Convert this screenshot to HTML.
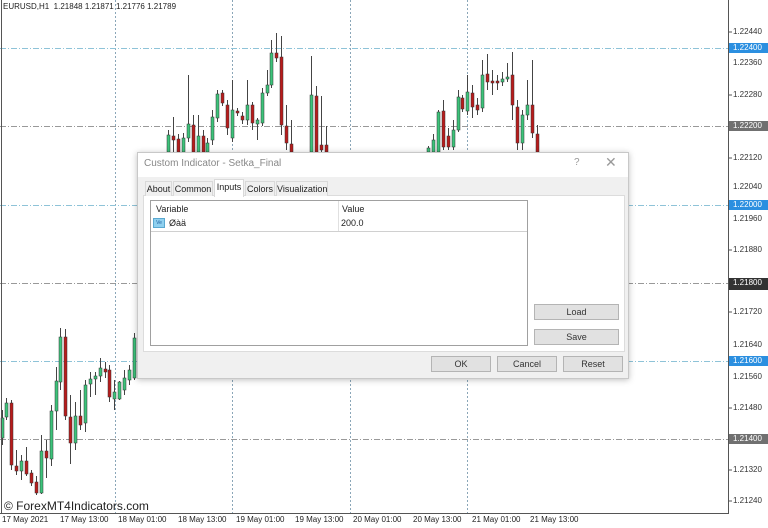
<!DOCTYPE html>
<html><head><meta charset="utf-8"><style>
*{margin:0;padding:0;box-sizing:border-box}
body{width:768px;height:528px;background:#fff;position:relative;overflow:hidden;font-family:"Liberation Sans",Tahoma,sans-serif;color:#222}
.a{position:absolute;white-space:nowrap}
.pl{position:absolute;left:733px;font-size:8px;line-height:10px;color:#333}
.pb{position:absolute;left:729px;width:39px;height:10px;font-size:8px;line-height:10px;padding-left:4px;color:#fff}
.tl{position:absolute;top:515px;font-size:8px;color:#222}
.dlg{position:absolute;left:137px;top:152px;width:492px;height:227px;background:#f0f0f0;border:1px solid #c8c8c8;box-shadow:0 1px 6px rgba(0,0,0,.25);font-size:9px}
.btn{position:absolute;background:#e1e1e1;border:1px solid #b4b4b4;text-align:center;font-size:9px;line-height:14px;color:#333}
.tab{position:absolute;top:28px;height:15px;border:1px solid #d9d9d9;border-bottom:none;background:#f0f0f0;font-size:9px;line-height:14px;text-align:center;color:#222}
</style></head><body>
<svg class="a" style="left:0;top:0" width="768" height="528">
<g stroke="#8aa6b8" stroke-width="1" stroke-dasharray="2,2">
<line x1="115.5" y1="0" x2="115.5" y2="513"/><line x1="232.5" y1="0" x2="232.5" y2="513"/><line x1="350.5" y1="0" x2="350.5" y2="513"/><line x1="467.5" y1="0" x2="467.5" y2="513"/>
</g>
<g stroke-width="1" stroke-dasharray="6,2,1,2">
<line x1="0" y1="48.5" x2="728" y2="48.5" stroke="#8ec3d8"/>
<line x1="0" y1="126.5" x2="728" y2="126.5" stroke="#999"/>
<line x1="0" y1="205.5" x2="728" y2="205.5" stroke="#8ec3d8"/>
<line x1="0" y1="283.5" x2="728" y2="283.5" stroke="#999"/>
<line x1="0" y1="361.5" x2="728" y2="361.5" stroke="#8ec3d8"/>
<line x1="0" y1="439.5" x2="728" y2="439.5" stroke="#999"/>
</g>
<g id="c" stroke="#555" stroke-width="1">
<!-- x, wickTop, wickBot, bodyTop, bodyBot, color -->
</g>
<line x1="728.5" y1="0" x2="728.5" y2="514" stroke="#555"/>
<line x1="0" y1="513.5" x2="729" y2="513.5" stroke="#555"/>
<line x1="1.5" y1="0" x2="1.5" y2="513" stroke="#555"/>
<g stroke="#555"><line x1="729" y1="32" x2="732" y2="32"/><line x1="729" y1="95" x2="732" y2="95"/><line x1="729" y1="158" x2="732" y2="158"/><line x1="729" y1="250" x2="732" y2="250"/><line x1="729" y1="312" x2="732" y2="312"/><line x1="729" y1="408" x2="732" y2="408"/><line x1="729" y1="470" x2="732" y2="470"/><line x1="729" y1="501" x2="732" y2="501"/></g>
</svg>
<script>
var d=[
[2,410,445,418,438,'g'],[6,398,420,403,417,'g'],[11,400,470,403,465,'r'],[16,450,475,466,471,'r'],[21,455,480,461,471,'g'],[26,447,476,461,474,'r'],[31,470,486,473,483,'r'],[36,476,495,482,493,'r'],[41,435,494,451,493,'g'],[46,440,478,451,458,'r'],[51,405,466,411,459,'g'],[56,367,430,381,411,'g'],[60,328,390,337,382,'g'],[65,329,420,337,416,'r'],[70,395,464,417,443,'r'],[75,402,450,416,443,'g'],[80,390,430,416,425,'r'],[85,380,432,385,423,'g'],[90,372,397,379,384,'g'],[95,372,395,376,379,'g'],[100,358,382,368,376,'g'],[105,362,378,369,372,'r'],[109,365,402,370,397,'r'],[114,380,410,392,399,'g'],[119,381,400,382,399,'g'],[124,370,395,378,390,'g'],[129,365,385,370,380,'g'],[134,333,380,338,378,'g'],
[168,130,160,135,152,'g'],[173,117,160,136,140,'r'],[178,134,160,139,152,'r'],[183,133,160,138,152,'g'],[188,75,142,124,138,'g'],[193,115,155,125,152,'r'],[198,115,160,136,152,'g'],[203,130,160,136,152,'r'],[207,138,160,143,152,'g'],[212,110,145,117,140,'g'],[217,90,122,94,118,'g'],[222,90,106,93,103,'r'],[227,100,135,105,128,'r'],[232,80,142,110,138,'g'],[237,108,116,111,113,'r'],[242,112,124,116,120,'r'],[247,80,125,105,120,'g'],[252,102,130,105,123,'r'],[257,118,140,120,124,'g'],[262,88,126,93,123,'g'],[267,70,96,85,93,'g'],[271,40,88,53,85,'g'],[276,33,62,53,58,'r'],[281,36,135,57,125,'r'],[286,105,150,126,143,'r'],[291,120,155,144,152,'r'],[311,56,155,95,152,'g'],[316,86,155,96,152,'r'],[321,96,155,145,150,'r'],[326,126,155,145,152,'r'],
[428,146,152,148,152,'g'],[433,134,152,140,152,'g'],[438,110,155,112,152,'g'],[443,100,150,111,147,'r'],[448,128,150,136,147,'r'],[453,120,150,130,147,'g'],[458,90,132,97,130,'g'],[462,95,112,98,109,'r'],[467,75,115,92,111,'g'],[472,85,118,93,107,'r'],[477,98,115,105,110,'r'],[482,60,112,75,108,'g'],[487,54,90,74,82,'r'],[492,70,95,81,83,'r'],[497,75,90,81,83,'r'],[502,72,86,79,82,'g'],[507,63,82,77,79,'g'],[512,52,120,75,105,'r'],[517,100,150,107,143,'r'],[522,110,150,115,143,'g'],[527,80,120,105,115,'g'],[532,60,138,105,133,'r'],[537,125,155,134,152,'r']];
var s='';d.forEach(function(c){s+='<line x1="'+(c[0]+.5)+'" y1="'+c[1]+'" x2="'+(c[0]+.5)+'" y2="'+c[2]+'" stroke="#444"/>';s+='<rect x="'+(c[0]-1)+'" y="'+c[3]+'" width="3" height="'+Math.max(1,c[4]-c[3])+'" fill="'+(c[5]=='g'?'#3cc37a':'#b81c1c')+'" stroke="#333" stroke-width=".5"/>';});
document.getElementById('c').innerHTML=s;
</script>
<div class="a" style="left:3px;top:2px;font-size:8px;color:#222">EURUSD,H1&nbsp; 1.21848 1.21871 1.21776 1.21789</div>
<div class="pl" style="top:27px">1.22440</div>
<div class="pb" style="top:43px;background:#2b8fe0">1.22400</div>
<div class="pl" style="top:58px">1.22360</div>
<div class="pl" style="top:90px">1.22280</div>
<div class="pb" style="top:121px;background:#707070">1.22200</div>
<div class="pl" style="top:153px">1.22120</div>
<div class="pl" style="top:182px">1.22040</div>
<div class="pb" style="top:200px;background:#2b8fe0">1.22000</div>
<div class="pl" style="top:214px">1.21960</div>
<div class="pl" style="top:245px">1.21880</div>
<div class="pb" style="top:278px;background:#333;height:12px">1.21800</div>
<div class="pl" style="top:307px">1.21720</div>
<div class="pl" style="top:340px">1.21640</div>
<div class="pb" style="top:356px;background:#2b8fe0">1.21600</div>
<div class="pl" style="top:372px">1.21560</div>
<div class="pl" style="top:403px">1.21480</div>
<div class="pb" style="top:434px;background:#707070">1.21400</div>
<div class="pl" style="top:465px">1.21320</div>
<div class="pl" style="top:496px">1.21240</div>
<div class="tl" style="left:2px">17 May 2021</div>
<div class="tl" style="left:60px">17 May 13:00</div>
<div class="tl" style="left:118px">18 May 01:00</div>
<div class="tl" style="left:178px">18 May 13:00</div>
<div class="tl" style="left:236px">19 May 01:00</div>
<div class="tl" style="left:295px">19 May 13:00</div>
<div class="tl" style="left:353px">20 May 01:00</div>
<div class="tl" style="left:413px">20 May 13:00</div>
<div class="tl" style="left:472px">21 May 01:00</div>
<div class="tl" style="left:530px">21 May 13:00</div>
<div class="a" style="left:4px;top:499px;font-size:12px;color:#222">© ForexMT4Indicators.com</div>

<div class="dlg">
<div class="a" style="left:0;top:0;width:490px;height:24px;background:#fff"></div>
<div class="a" style="left:6px;top:5px;font-size:10px;color:#888">Custom Indicator - Setka_Final</div>
<div class="a" style="left:436px;top:4px;font-size:10px;color:#999">?</div>
<div class="a" style="left:467px;top:1px;font-size:14px;color:#999">✕</div>
<div class="a" style="left:5px;top:42px;width:482px;height:157px;background:#fff;border:1px solid #dcdcdc"></div>
<div class="tab" style="left:7px;width:27px">About</div>
<div class="tab" style="left:35px;width:40px">Common</div>
<div class="tab" style="left:76px;top:26px;width:30px;height:18px;background:#fff;line-height:14px">Inputs</div>
<div class="tab" style="left:107px;width:30px">Colors</div>
<div class="tab" style="left:138px;width:52px">Visualization</div>
<div class="a" style="left:12px;top:47px;width:378px;height:146px;background:#fff;border:1px solid #a0a0a0"></div>
<div class="a" style="left:200px;top:48px;width:1px;height:30px;background:#e0e0e0"></div>
<div class="a" style="left:13px;top:78px;width:376px;height:1px;background:#d0d0d0"></div>
<div class="a" style="left:18px;top:51px">Variable</div>
<div class="a" style="left:204px;top:51px">Value</div>
<div class="a" style="left:15px;top:65px;width:12px;height:10px;background:#8fd0ef;border:1px solid #5aa8d0;font-size:5px;color:#2060a0;line-height:8px;text-align:center">Ve</div>
<div class="a" style="left:31px;top:65px">Øàä</div>
<div class="a" style="left:203px;top:65px">200.0</div>
<div class="btn" style="left:396px;top:151px;width:85px;height:16px">Load</div>
<div class="btn" style="left:396px;top:176px;width:85px;height:16px">Save</div>
<div class="btn" style="left:293px;top:203px;width:60px;height:16px">OK</div>
<div class="btn" style="left:359px;top:203px;width:60px;height:16px">Cancel</div>
<div class="btn" style="left:425px;top:203px;width:60px;height:16px">Reset</div>
</div>
</body></html>
